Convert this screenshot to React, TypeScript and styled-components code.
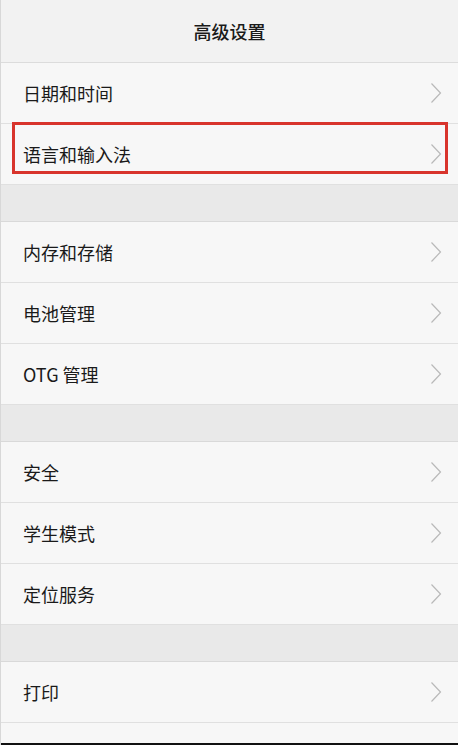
import React from "react";
import styled, { createGlobalStyle } from "styled-components";

const Global = createGlobalStyle`
  html, body { margin: 0; padding: 0; background: #f7f7f7; }
  * { box-sizing: border-box; }
`;

const Screen = styled.div`
  width: 458px;
  height: 745px;
  display: flex;
  flex-direction: column;
  background: #f7f7f7;
  border-left: 1px solid #d8d8d8;
  font-family: "Noto Sans CJK SC", "Noto Sans", sans-serif;
  color: #1c1c1c;
  overflow: hidden;
`;

const Content = styled.div`
  flex: 1;
  display: flex;
  flex-direction: column;
  overflow: hidden;
`;

const Header = styled.div`
  height: 63px;
  flex-shrink: 0;
  display: flex;
  align-items: center;
  justify-content: center;
  background: #f2f2f2;
  border-bottom: 1px solid #dcdcdc;
  font-size: 18px;
  font-weight: 500;
  color: #1a1a1a;
  padding-bottom: 1px;
`;

const Row = styled.div`
  position: relative;
  height: 61px;
  flex-shrink: 0;
  display: flex;
  align-items: center;
  justify-content: space-between;
  padding: 0 16px 0 22px;
  background: #f7f7f7;
  border-bottom: 1px solid #e0e0e0;
`;

const Label = styled.span`
  font-size: 18px;
  line-height: 1;
  color: #1a1a1a;
`;

const Gap = styled.div`
  height: 37px;
  flex-shrink: 0;
  background: #e9e9e9;
  border-bottom: 1px solid #d9d9d9;
`;

const Highlight = styled.div`
  position: absolute;
  left: 11px;
  right: 10px;
  top: -2px;
  bottom: 10px;
  border: 3px solid #d8342c;
  pointer-events: none;
`;

const BottomEdge = styled.div`
  height: 2px;
  flex-shrink: 0;
  background: #111;
`;

const Chevron = () => (
  <svg width="12" height="22" viewBox="0 0 12 22">
    <polyline
      points="1.5,1.5 10.5,11 1.5,20.5"
      fill="none"
      stroke="#b9b9b9"
      strokeWidth="1.2"
    />
  </svg>
);

type Item = { label: string; highlighted?: boolean };

const sections: Item[][] = [
  [{ label: "日期和时间" }, { label: "语言和输入法", highlighted: true }],
  [{ label: "内存和存储" }, { label: "电池管理" }, { label: "OTG 管理" }],
  [{ label: "安全" }, { label: "学生模式" }, { label: "定位服务" }],
  [{ label: "打印" }, { label: "" }],
];

export default function App() {
  return (
    <>
      <Global />
      <Screen>
        <Content>
          <Header>高级设置</Header>
          {sections.map((sec, i) => (
            <React.Fragment key={i}>
              {i > 0 && <Gap />}
              {sec.map((it, j) => (
                <Row key={j}>
                  <Label>{it.label}</Label>
                  <Chevron />
                  {it.highlighted && <Highlight />}
                </Row>
              ))}
            </React.Fragment>
          ))}
        </Content>
        <BottomEdge />
      </Screen>
    </>
  );
}
